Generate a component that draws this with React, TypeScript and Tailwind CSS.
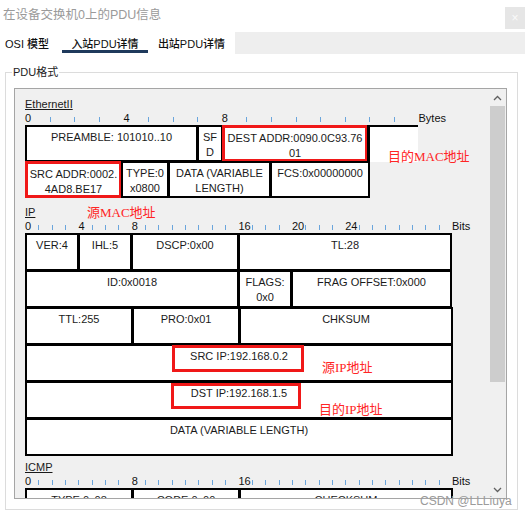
import React from "react";

// PDU detail dialog, "入站PDU详情" tab

type CellProps = { className: string; children?: React.ReactNode };

function Cell({ className, children }: CellProps) {
  return (
    <div
      className={`shrink-0 bg-white text-center pt-[3px] leading-[15px] whitespace-nowrap text-[#1a1a1a] ${className}`}
    >
      {children}
    </div>
  );
}

function Tick() {
  return <div className="w-px h-[5px] bg-[#6aa5dc] mb-[3px]" />;
}

type RulerProps = { count: number; slot: string; labels: number[]; unit: string };

function Ruler({ count, slot, labels, unit }: RulerProps) {
  return (
    <div className="flex items-end h-[14px] text-[11px] leading-[14px] text-[#111]">
      {Array.from({ length: count }).map((_, i) => (
        <div key={i} className={`${slot} shrink-0 flex items-end`}>
          {labels.includes(i) ? <span>{i}</span> : <Tick />}
        </div>
      ))}
      <span>{unit}</span>
    </div>
  );
}

function SectionLabel({ children, className }: { children: React.ReactNode; className?: string }) {
  return (
    <div className={`text-[11px] leading-[14px] text-[#1a1a1a] underline ${className ?? ""}`}>
      {children}
    </div>
  );
}

function Chevron({ down }: { down?: boolean }) {
  return (
    <svg width="9" height="6" viewBox="0 0 9 6" className={down ? "rotate-180" : ""}>
      <path d="M1 5 L4.5 1.5 L8 5" fill="none" stroke="#606060" strokeWidth="1.3" />
    </svg>
  );
}

export default function App() {
  const black = "border-2 border-black";
  const red = "border-[3px] border-[#f01818]";
  const note = "absolute text-[13px] leading-[16px] text-[#ff2525] font-['Liberation_Serif','Noto_Sans_CJK_SC',serif] whitespace-nowrap";

  return (
    <div className="relative w-[525px] h-[518px] overflow-hidden bg-white font-['Liberation_Sans','Noto_Sans_CJK_SC',sans-serif]">
      {/* title */}
      <div className="h-[32px] flex items-start justify-between">
        <div className="pl-[3px] pt-[8px] text-[12.5px] leading-[15px] text-[#9a9a9a]">
          在设备交换机0上的PDU信息
        </div>
        <div className="mt-[7px] w-[20px] h-[22px] bg-[#e6e6e6] flex items-center justify-center text-[12px] text-[#fafafa]">
          ×
        </div>
      </div>

      {/* tabs */}
      <div className="h-[22px] flex items-start text-[11px] leading-[14px] text-[#111] font-medium">
        <div className="w-[62px] h-[22px] pl-[5px] pt-[5px]">OSI 模型</div>
        <div className="w-[86px] h-[21px] pt-[5px] text-center border-b-[3px] border-[#1f3a5c]">入站PDU详情</div>
        <div className="w-[87px] h-[22px] pt-[5px] text-center">出站PDU详情</div>
        <div className="flex-1 h-[22px] bg-[#eeeeee]" />
      </div>

      {/* PDU format group */}
      <fieldset className="mt-[11px] ml-[5px] w-[513px] h-[445px] border border-[#dcdcdc]">
        <legend className="ml-[6px] px-[1px] text-[11px] leading-[14px] text-[#222]">PDU格式</legend>

        <div className="mt-[9px] ml-[8px] w-[493px] h-[411px] border border-[#a5a5a5] bg-[#f0f0f0] flex">
          <div className="relative flex-1 overflow-hidden pl-[10px] pt-[8px] text-[11px]">
            <SectionLabel>EthernetII</SectionLabel>
            <Ruler count={16} slot="w-[24.6px]" labels={[0, 4, 8]} unit="Bytes" />

            <div className="flex">
              <Cell className={`w-[173px] h-[37px] ${black}`}>PREAMBLE: 101010..10</Cell>
              <Cell className={`w-[26px] h-[37px] -ml-px ${black}`}>
                SF
                <br />D
              </Cell>
              <Cell className={`w-[146px] h-[37px] -ml-px ${red}`}>
                DEST ADDR:0090.0C93.76
                <br />
                01
              </Cell>
              <Cell className="w-[51px] h-[37px] -ml-px border-t-2 border-l-[3px] border-black" />
            </div>
            <div className="flex -mt-px">
              <Cell className={`w-[97px] h-[37px] ${red}`}>
                SRC ADDR:0002.
                <br />
                4AD8.BE17
              </Cell>
              <Cell className={`w-[48px] h-[37px] -ml-px ${black}`}>
                TYPE:0
                <br />
                x0800
              </Cell>
              <Cell className={`w-[103px] h-[37px] -ml-px ${black}`}>
                DATA (VARIABLE
                <br />
                LENGTH)
              </Cell>
              <Cell className={`w-[100px] h-[37px] -ml-px ${black}`}>FCS:0x00000000</Cell>
            </div>

            <SectionLabel className="mt-[7px]">IP</SectionLabel>
            <Ruler count={32} slot="w-[13.35px]" labels={[0, 4, 8, 16, 20, 24]} unit="Bits" />

            <div className="flex">
              <Cell className={`w-[54px] h-[38px] ${black}`}>VER:4</Cell>
              <Cell className={`w-[54px] h-[38px] -ml-px ${black}`}>IHL:5</Cell>
              <Cell className={`w-[108px] h-[38px] -ml-px ${black}`}>DSCP:0x00</Cell>
              <Cell className={`w-[214px] h-[38px] -ml-px ${black}`}>TL:28</Cell>
            </div>
            <div className="flex -mt-px">
              <Cell className={`w-[214px] h-[38px] ${black}`}>ID:0x0018</Cell>
              <Cell className={`w-[54px] h-[38px] -ml-px ${black}`}>
                FLAGS:
                <br />
                0x0
              </Cell>
              <Cell className={`w-[161px] h-[38px] -ml-px ${black}`}>FRAG OFFSET:0x000</Cell>
            </div>
            <div className="flex -mt-px">
              <Cell className={`w-[108px] h-[38px] ${black}`}>TTL:255</Cell>
              <Cell className={`w-[108px] h-[38px] -ml-px ${black}`}>PRO:0x01</Cell>
              <Cell className={`w-[214px] h-[38px] -ml-px ${black}`}>CHKSUM</Cell>
            </div>
            <Cell className={`w-[428px] h-[38px] -mt-px ${black}`}>SRC IP:192.168.0.2</Cell>
            <Cell className={`w-[428px] h-[38px] -mt-px ${black}`}>DST IP:192.168.1.5</Cell>
            <Cell className={`w-[428px] h-[38px] -mt-px ${black}`}>DATA (VARIABLE LENGTH)</Cell>

            <SectionLabel className="mt-[4px]">ICMP</SectionLabel>
            <Ruler count={32} slot="w-[13.35px]" labels={[0, 8, 16]} unit="Bits" />
            <div className="flex">
              <Cell className={`w-[108px] h-[38px] ${black}`}>TYPE:0x08</Cell>
              <Cell className={`w-[108px] h-[38px] -ml-px ${black}`}>CODE:0x00</Cell>
              <Cell className={`w-[214px] h-[38px] -ml-px ${black}`}>CHECKSUM</Cell>
            </div>

            {/* hand-drawn highlights */}
            <div className="absolute left-[157px] top-[256px] w-[132px] h-[27px] border-[3px] border-[#f01818]" />
            <div className="absolute left-[156px] top-[294px] w-[130px] h-[26px] border-[3px] border-[#f01818]" />
            <div className={`${note} left-[373px] top-[60px]`}>目的MAC地址</div>
            <div className={`${note} left-[72px] top-[116px]`}>源MAC地址</div>
            <div className={`${note} left-[307px] top-[271px]`}>源IP地址</div>
            <div className={`${note} left-[304px] top-[313px]`}>目的IP地址</div>
          </div>

          {/* scrollbar */}
          <div className="w-[17px] shrink-0 flex flex-col">
            <div className="h-[17px] flex items-center justify-center">
              <Chevron />
            </div>
            <div className="mx-px h-[276px] bg-[#cdcdcd]" />
            <div className="flex-1" />
            <div className="h-[17px] flex items-center justify-center">
              <Chevron down />
            </div>
          </div>
        </div>
      </fieldset>

      <div className="absolute left-[420px] top-[494px] text-[12px] leading-[14px] text-[#9b9b9b]">
        CSDN @LLLiuya
      </div>
    </div>
  );
}
